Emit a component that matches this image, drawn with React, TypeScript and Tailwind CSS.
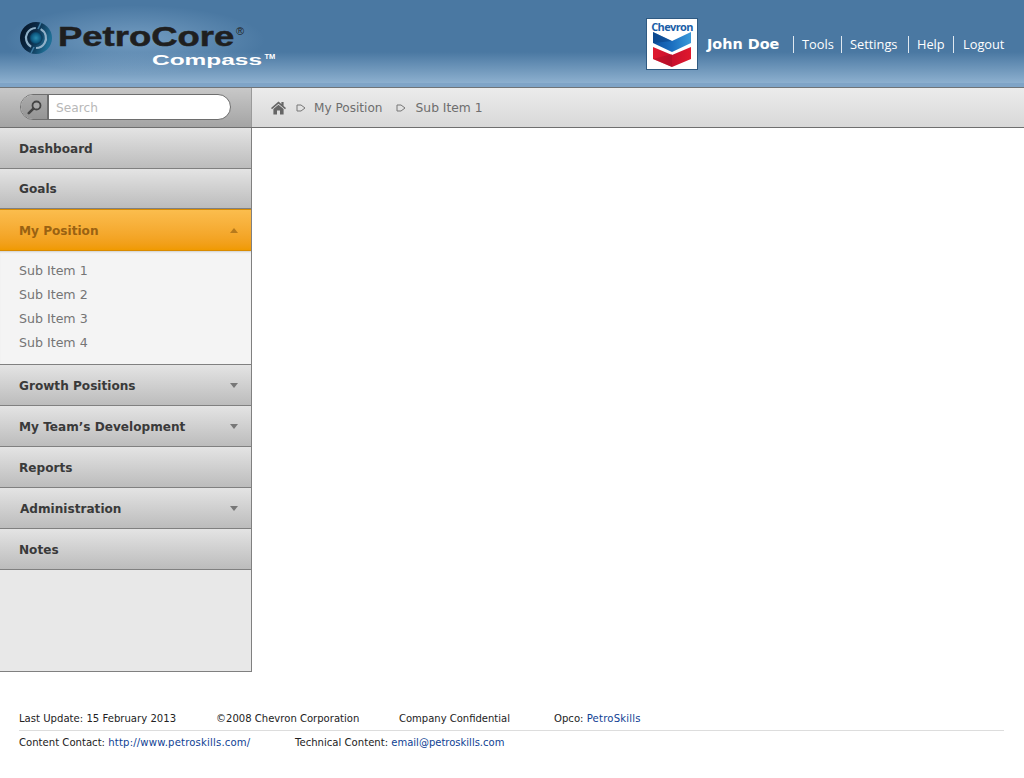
function Sep() {
  return (
    <svg width="10" height="8" viewBox="0 0 10 8" className="shrink-0 block">
      <path d="M1 1 L5 1 L9 4 L5 7 L1 7 Z" fill="none" stroke="#777" strokeWidth="1" />
    </svg>
  );
}

function HomeIcon() {
  return (
    <svg width="15" height="14" viewBox="0 0 15 14" className="shrink-0 block">
      <path d="M7.5 0.5 L0 7 L1 8.2 L7.5 2.7 L14 8.2 L15 7 L12.6 4.9 V1 H10.4 V3 Z" fill="#666" />
      <path d="M2.4 8 L7.5 3.8 L12.6 8 V13.5 H9 V9.5 H6 V13.5 H2.4 Z" fill="#666" />
    </svg>
  );
}

function SearchIcon() {
  return (
    <svg width="15" height="15" viewBox="0 0 15 15" className="shrink-0 block">
      <circle cx="9.5" cy="5.5" r="4" fill="#a9a9a9" stroke="#454545" strokeWidth="1.8" />
      <path d="M6.4 8.6 L1.8 13.2" stroke="#454545" strokeWidth="2.6" strokeLinecap="round" />
    </svg>
  );
}

function Caret({ up = false, color = "#777" }: { up?: boolean; color?: string }) {
  return (
    <svg width="8" height="5" viewBox="0 0 8 5" className="shrink-0">
      <path d={up ? "M4 0 L8 5 L0 5 Z" : "M0 0 L8 0 L4 5 Z"} fill={color} />
    </svg>
  );
}

function PetroMark() {
  return (
    <svg width="34" height="34" viewBox="0 0 34 34" className="shrink-0">
      <defs>
        <linearGradient id="pm" x1="0" y1="0" x2="1" y2="0.4">
          <stop offset="0" stopColor="#05101f" />
          <stop offset="0.5" stopColor="#0b2a47" />
          <stop offset="1" stopColor="#1f6f96" />
        </linearGradient>
        <radialGradient id="pc" cx="0.5" cy="0.5" r="0.5">
          <stop offset="0" stopColor="#2a8cb0" />
          <stop offset="0.7" stopColor="#0e5a82" />
          <stop offset="1" stopColor="#0a3150" />
        </radialGradient>
      </defs>
      <circle cx="17" cy="17" r="16" fill="url(#pm)" />
      <circle cx="17" cy="17" r="10" fill="none" stroke="#8fb0c8" strokeWidth="2.2" strokeDasharray="26 5" transform="rotate(-60 17 17)" />
      <circle cx="17" cy="17" r="6.5" fill="url(#pc)" />
      <path d="M22 1.5 L19 8" stroke="#3f7ba3" strokeWidth="1.6" />
      <path d="M12 32 L15 26" stroke="#3f7ba3" strokeWidth="1.6" />
    </svg>
  );
}

function ChevronLogo() {
  return (
    <div className="w-[52px] h-[52px] shrink-0 bg-white border border-[#2f5a82] flex flex-col items-center pt-[2px]">
      <span className="text-[#1a5ea8] font-bold text-[11px] leading-[11px] font-['Open_Sans',sans-serif] tracking-[-0.65px]">Chevron</span>
      <svg width="38" height="36" viewBox="0 0 38 36">
        <defs>
          <linearGradient id="cb" x1="0" y1="0" x2="1" y2="0">
            <stop offset="0" stopColor="#0e4f9e" />
            <stop offset="0.5" stopColor="#1b6fc0" />
            <stop offset="1" stopColor="#3a9ad9" />
          </linearGradient>
          <linearGradient id="cr" x1="0" y1="0" x2="1" y2="0">
            <stop offset="0" stopColor="#e0182d" />
            <stop offset="0.5" stopColor="#c8102e" />
            <stop offset="1" stopColor="#e0182d" />
          </linearGradient>
        </defs>
        <path d="M0 0 L19 9 L38 0 L38 11 L19 20 L0 11 Z" fill="url(#cb)" />
        <path d="M0 15 L19 23 L38 15 L38 27 L19 35 L0 27 Z" fill="url(#cr)" />
        <path d="M0 27 L19 22 L19 35 Z" fill="#a50d26" opacity="0.45" />
        <path d="M0 0 L19 9 L0 11 Z" fill="#0b3f80" opacity="0.5" />
      </svg>
    </div>
  );
}

function MenuItem({ label, caret = false, tall = true, inset = false }: { label: string; caret?: boolean; tall?: boolean; inset?: boolean }) {
  return (
    <div className={`${tall ? "h-[41px] pt-[3px]" : "h-[40px] pt-[2px]"} ${inset ? "pl-[20px]" : "pl-[19px]"} flex items-center justify-between pr-[13px] border-b border-[#808080] bg-gradient-to-b from-[#e4e4e4] to-[#bcbcbc] font-bold text-[12.1px] text-[#3a3a3a]`}>
      <span>{label}</span>
      {caret && <span className="-mt-[3px]"><Caret /></span>}
    </div>
  );
}

export default function App() {
  return (
    <div className="w-[1024px] h-[778px] bg-white overflow-hidden font-['DejaVu_Sans',sans-serif] flex flex-col">
      <header className="h-[88px] shrink-0 flex items-start justify-between border-b border-[#6f7478] bg-[linear-gradient(to_bottom,#4a78a2_0,#4a78a2_52px,#8db0cf_83px,#7fa4c7_83px,#7fa4c7_87px)]">
        <div className="relative w-[300px] h-[87px]">
          <div className="absolute left-[0px] top-[4px] w-[270px] h-[72px] bg-[radial-gradient(ellipse_at_center,rgba(165,200,230,0.45),rgba(165,200,230,0)_68%)]" />
          <div className="relative flex items-start pl-[19px] pt-[21px]">
            <PetroMark />
            <div className="ml-[5px] relative w-[220px] h-[50px]">
              <span className="block origin-left scale-x-[1.35] text-[27px] leading-[30px] mt-[1px] font-bold text-[#1f1f1f] [-webkit-text-stroke:0.5px_#1f1f1f] font-['Liberation_Sans',sans-serif] whitespace-nowrap">PetroCore</span>
              <span className="absolute left-[178px] top-[5px] text-[11px] leading-none text-[#1f1f1f] font-['Liberation_Sans',sans-serif]">®</span>
              <div className="flex justify-start pl-[94px]">
                <span className="block origin-left scale-x-[1.63] text-[15px] leading-[16px] font-bold text-white font-['Liberation_Sans',sans-serif] whitespace-nowrap">Compass</span>
                <span className="ml-[45px] text-[7.5px] leading-[10px] font-bold text-white font-['Liberation_Sans',sans-serif]">TM</span>
              </div>
            </div>
          </div>
        </div>
        <div className="flex items-start pt-[18px] pr-[20px]">
          <ChevronLogo />
          <span className="ml-[9px] mr-[14px] mt-[17px] w-[72px] text-white font-bold text-[14.4px] leading-[18px] whitespace-nowrap">John Doe</span>
          <nav className="flex mt-[18px] text-white text-[12.8px] leading-[17px] font-['Open_Sans',sans-serif]">
            <a className="w-[48px] border-l border-[#dfe8f0] pl-[8px]">Tools</a>
            <a className="w-[67px] border-l border-[#dfe8f0] pl-[8px]">Settings</a>
            <a className="w-[45px] border-l border-[#dfe8f0] pl-[8px]">Help</a>
            <a className="w-[51px] border-l border-[#dfe8f0] pl-[9px]">Logout</a>
          </nav>
        </div>
      </header>

      <div className="flex h-[40px] shrink-0 border-b border-[#6f6f6f]">
        <div className="w-[252px] shrink-0 border-r border-[#9a9a9a] bg-gradient-to-b from-[#c8c8c8] to-[#a4a4a4] pl-[20px] pt-[6px]">
          <div className="w-[211px] h-[26px] rounded-full border border-[#6e6e6e] flex overflow-hidden bg-white">
            <div className="w-[28px] shrink-0 border-r-2 border-[#6e6e6e] bg-gradient-to-b from-[#ababab] to-[#959595] flex items-center justify-center">
              <SearchIcon />
            </div>
            <span className="pl-[7px] text-[12.2px] leading-[26px] text-[#b8b8b8]">Search</span>
          </div>
        </div>
        <div className="flex-1 flex items-center pl-[19px] pt-[1px] bg-gradient-to-b from-[#ececec] to-[#d8d8d8] text-[12.1px] text-[#6e6e6e]">
          <HomeIcon />
          <span className="ml-[10px]"><Sep /></span>
          <span className="ml-[8px]">My Position</span>
          <span className="ml-[13px]"><Sep /></span>
          <span className="ml-[10px] text-[12.3px]">Sub Item 1</span>
        </div>
      </div>

      <div className="flex h-[544px] shrink-0">
        <aside className="w-[252px] shrink-0 border-r border-b border-[#808080] bg-[#e8e8e8] flex flex-col">
          <MenuItem label="Dashboard" />
          <MenuItem label="Goals" tall={false} />
          <div className="h-[42px] pt-[2px] flex items-center justify-between pl-[19px] pr-[13px] border-y border-[#d98b00] bg-gradient-to-b from-[#fbbd4d] to-[#f09a00] font-bold text-[12.1px] text-[#9a6212]">
            <span>My Position</span>
            <span className="-mt-[2px]"><Caret up color="#b77a1c" /></span>
          </div>
          <div className="h-[114px] border-b border-[#808080] bg-[#f4f4f4] shadow-[inset_0_2px_2px_-1px_rgba(0,0,0,0.15)] pl-[19px] pt-[8px] text-[12.6px] leading-[24px] text-[#757575]">
            <div>Sub Item 1</div>
            <div>Sub Item 2</div>
            <div>Sub Item 3</div>
            <div>Sub Item 4</div>
          </div>
          <MenuItem label="Growth Positions" caret />
          <MenuItem label="My Team’s Development" caret />
          <MenuItem label="Reports" />
          <MenuItem label="Administration" caret inset />
          <MenuItem label="Notes" />
        </aside>
        <main className="flex-1 bg-white" />
      </div>

      <footer className="ml-[19px] mr-[20px] mt-[40px] text-[10.1px] text-[#222222]">
        <div className="h-[19px] flex items-start border-b border-[#dddddd] leading-[14px]">
          <span className="w-[197px]">Last Update: 15 February 2013</span>
          <span className="w-[183px] text-[10.05px]">©2008 Chevron Corporation</span>
          <span className="w-[155px] text-[10px]">Company Confidential</span>
          <span>Opco: <a className="text-[#0f3f94] tracking-[0.2px]">PetroSkills</a></span>
        </div>
        <div className="flex pt-[5px] leading-[14px]">
          <span className="w-[276px]">Content Contact: <a className="text-[#0f3f94] tracking-[0.17px]">http://www.petroskills.com/</a></span>
          <span>Technical Content: <a className="text-[#0f3f94] text-[10px]">email@petroskills.com</a></span>
        </div>
      </footer>
    </div>
  );
}
